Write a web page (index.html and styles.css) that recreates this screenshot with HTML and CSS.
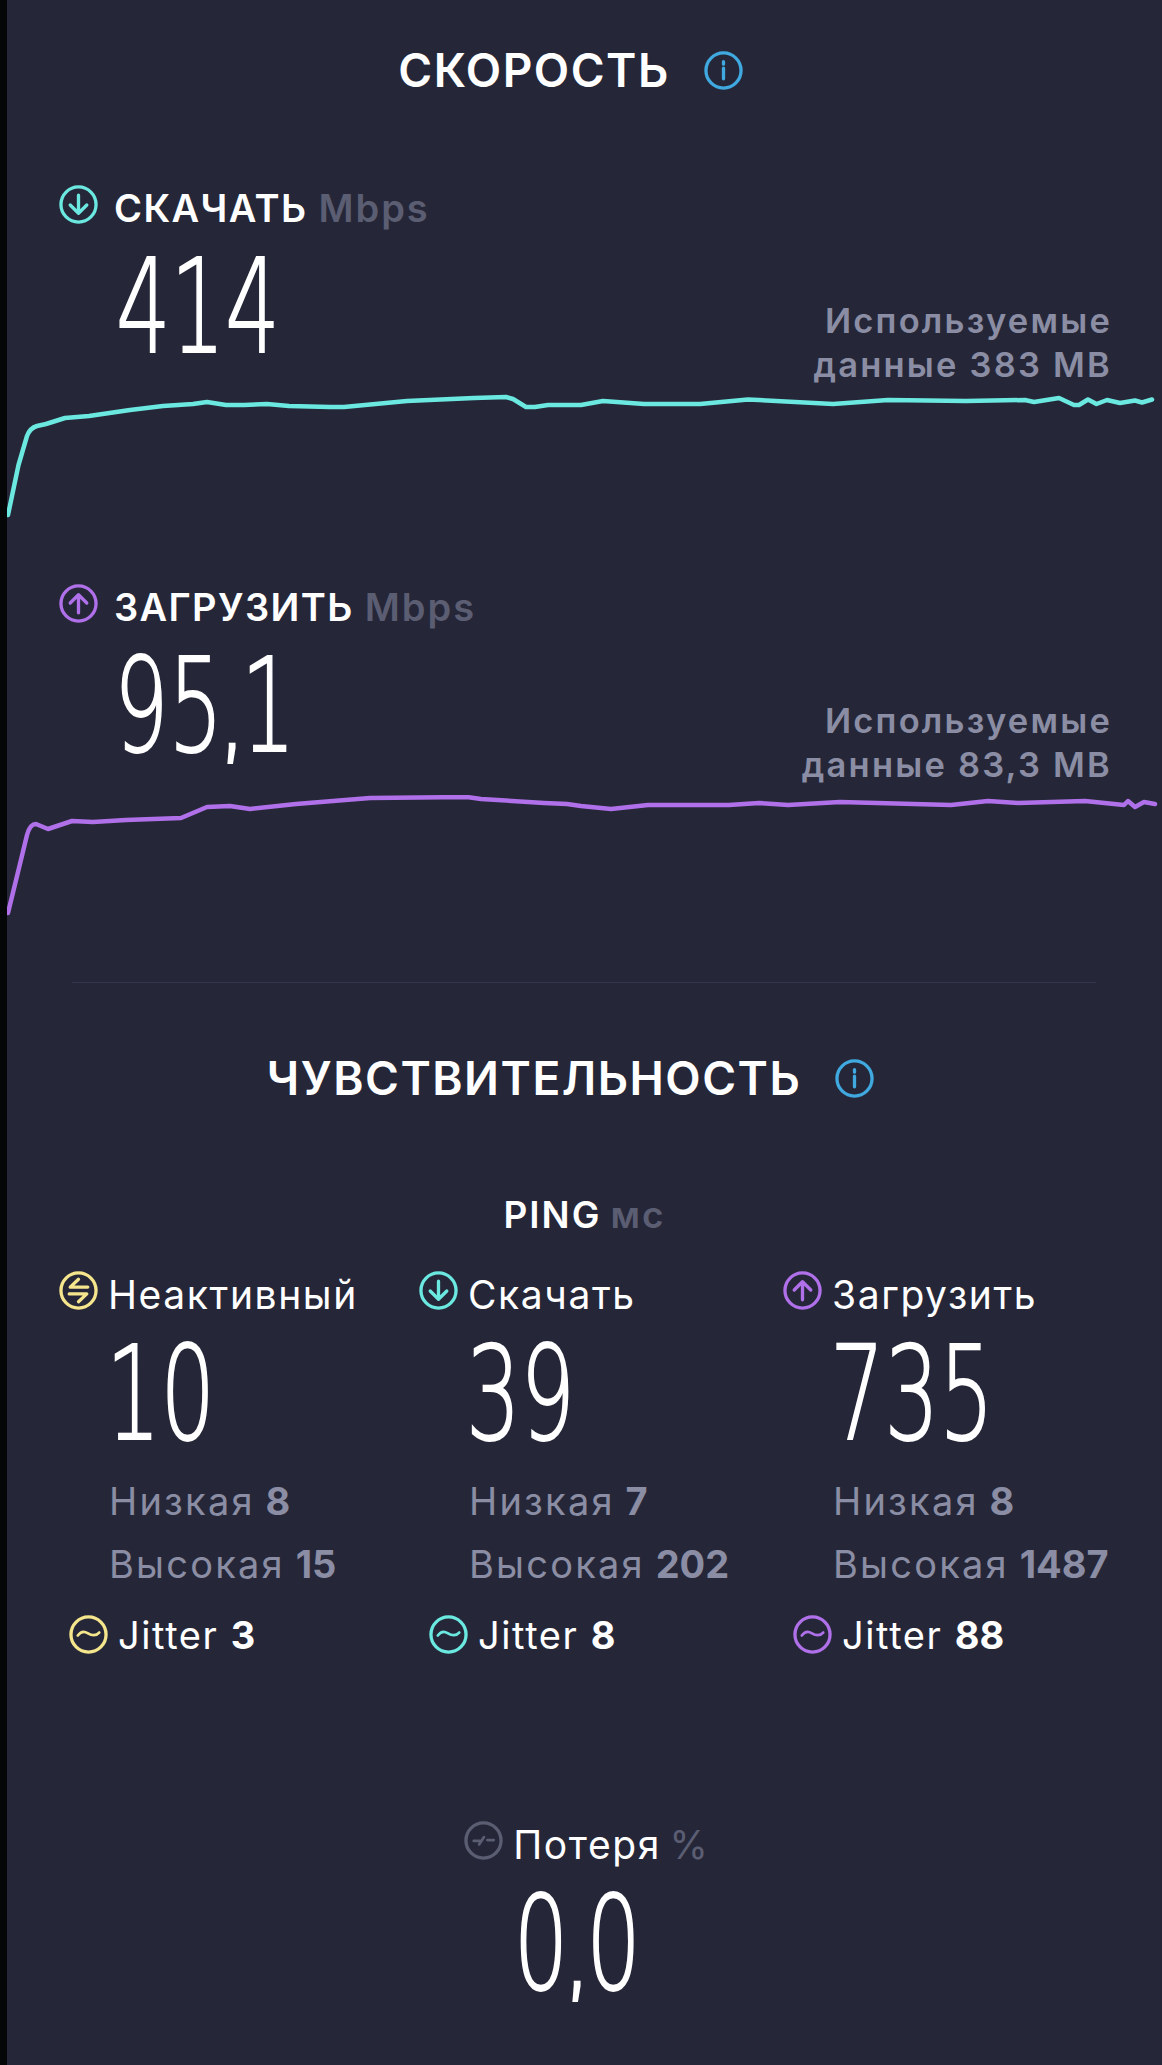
FILE: index.html
```html
<!DOCTYPE html>
<html lang="ru">
<head>
    <meta charset="UTF-8">
    <title>Скорость</title>
    <link rel="stylesheet" href="styles.css">
</head>
<body>
<svg class="sprite" width="0" height="0">
    <symbol id="i-down" viewBox="0 0 40 40"><circle cx="20" cy="20" r="18"/><path d="M20 10.500v18.500M11.500 20.500l8.500 8.500 8.500-8.500"/></symbol>
    <symbol id="i-up" viewBox="0 0 40 40"><circle cx="20" cy="20" r="18"/><path d="M20 29.500V11M11.500 19.500l8.500-8.500 8.500 8.500"/></symbol>
    <symbol id="i-idle" viewBox="0 0 40 40"><circle cx="20" cy="20" r="18"/><path d="M20 8.500l-8.500 8h18M20 31.500l8.500-8h-18"/></symbol>
    <symbol id="i-jitter" viewBox="0 0 40 40"><circle cx="20" cy="20" r="18"/><path class="thin" d="M9 21c3-4 6-5 10-2.500s8 4 12-.5"/></symbol>
    <symbol id="i-loss" viewBox="0 0 40 40"><circle cx="20" cy="20" r="18"/><path class="thin" d="M10 20.500h6M15.500 24l5-7.500M24 19.500h6.500"/></symbol>
    <symbol id="i-info" viewBox="0 0 40 40"><circle cx="20" cy="20" r="18"/><path d="M20 17.500v11M20 11v2.500"/></symbol>
</svg>

<main class="page">
    <h1 class="title title-speed"><span>СКОРОСТЬ</span> <svg class="icon blue"><use href="#i-info"/></svg></h1>

    <section class="speed speed-down">
        <div class="speed-top">
            <div>
                <div class="speed-head">
                    <svg class="icon cyan"><use href="#i-down"/></svg>
                    <span class="speed-name">СКАЧАТЬ</span> <span class="unit">Mbps</span>
                </div>
                <div class="big speed-value">414</div>
            </div>
            <div class="used">Используемые<br>данные 383 MB</div>
        </div>
        <svg class="chart" width="1155" height="130" viewBox="7 392 1155 130">
            <path class="line-cyan" d="M8 515L18.500 465L27 436Q30 428 37 426L46 424L65 418L89 416L130 410L163 406L193 404L207 402L226 405L244 405L267 404L289 406L330 407L344 407L407 401L474 398L506 397L513 399L526 407L535 407L548 405L581 405L603 401L644 404L700 404L748 399.500L833 404L888 400L966 401L1025 400L1034 402L1059 398L1074 405L1079 405L1088 399.500L1096.500 404L1107 400L1120 403L1135 400.500L1142 402.500L1152 399.500"/>
        </svg>
    </section>

    <section class="speed speed-up">
        <div class="speed-top">
            <div>
                <div class="speed-head">
                    <svg class="icon purple"><use href="#i-up"/></svg>
                    <span class="speed-name">ЗАГРУЗИТЬ</span> <span class="unit">Mbps</span>
                </div>
                <div class="big speed-value">95<span class="comma">,</span>1</div>
            </div>
            <div class="used">Используемые<br>данные 83,3 MB</div>
        </div>
        <svg class="chart" width="1155" height="125" viewBox="7 795 1155 125">
            <path class="line-purple" d="M8 913L18.500 870L27 835Q30 824 36 824L48 829L72 821L93 822L126 820L181 818L207 807L230 806L250 809L296 804L370 798L467 797L481 799L544 803L567 804L581 806L611 809L648 805L729 805L759 803L788 805L840 802L951 805L988 801L1018 803L1085 801L1124 805L1128 801L1135 807L1144 802L1155 804"/>
        </svg>
    </section>

    <hr class="divider">

    <h1 class="title title-latency"><span>ЧУВСТВИТЕЛЬНОСТЬ</span> <svg class="icon blue"><use href="#i-info"/></svg></h1>

    <h2 class="ping"><b>PING</b> <span class="unit">мс</span></h2>

    <section class="ping-grid">
        <div class="ping-col">
            <div class="ping-head"><svg class="icon yellow"><use href="#i-idle"/></svg><span>Неактивный</span></div>
            <div class="big ping-value">10</div>
            <div class="stat">Низкая <b>8</b></div>
            <div class="stat">Высокая <b>15</b></div>
            <div class="jitter"><svg class="icon yellow"><use href="#i-jitter"/></svg><span>Jitter <b>3</b></span></div>
        </div>
        <div class="ping-col">
            <div class="ping-head"><svg class="icon cyan"><use href="#i-down"/></svg><span>Скачать</span></div>
            <div class="big ping-value">39</div>
            <div class="stat">Низкая <b>7</b></div>
            <div class="stat">Высокая <b>202</b></div>
            <div class="jitter"><svg class="icon cyan"><use href="#i-jitter"/></svg><span>Jitter <b>8</b></span></div>
        </div>
        <div class="ping-col">
            <div class="ping-head"><svg class="icon purple"><use href="#i-up"/></svg><span>Загрузить</span></div>
            <div class="big ping-value">735</div>
            <div class="stat">Низкая <b>8</b></div>
            <div class="stat">Высокая <b>1487</b></div>
            <div class="jitter"><svg class="icon purple"><use href="#i-jitter"/></svg><span>Jitter <b>88</b></span></div>
        </div>
    </section>

    <section class="loss">
        <div class="ping-head loss-head"><svg class="icon gray"><use href="#i-loss"/></svg><span>Потеря <span class="unit-light">%</span></span></div>
        <div class="big loss-value">0<span class="comma">,</span>0</div>
    </section>
</main>
</body>
</html>
```

FILE: styles.css
```css
body {
    margin: 0;
    height: 2065px;
    overflow: hidden;
    background: #252738;
    color: #fff;
    font-family: Inter, "Noto Sans", sans-serif;
}
.sprite {
    position: absolute;
}
.page {
    box-sizing: border-box;
    height: 2065px;
    border-left: 7px solid #050608;
}
.icon {
    width: 39px;
    height: 39px;
    flex: none;
    fill: none;
    stroke-width: 3.4;
    stroke-linecap: round;
    stroke-linejoin: round;
}
.thin {
    stroke-width: 2.8;
}
.blue { stroke: #3fa9e0; }
.cyan { stroke: #6be8e0; }
.purple { stroke: #b070ea; }
.yellow { stroke: #f5e58c; }
.gray { stroke: #5b5d72; }

.title {
    display: flex;
    justify-content: center;
    align-items: center;
    gap: 34px;
    height: 54px;
    margin: 0;
    padding-right: 28px;
    font-size: 46px;
    font-weight: 600;
    line-height: 54px;
    letter-spacing: 1.5px;
}
.title-speed {
    padding-top: 43px;
}
.title-latency {
    margin-top: 68px;
}

.speed {
    padding-top: 87px;
}
.speed-up {
    padding-top: 57px;
}
.speed-top {
    display: flex;
    justify-content: space-between;
    align-items: flex-end;
    height: 208px;
    padding: 0 50px 0 52px;
}
.speed-up .speed-top {
    height: 216px;
}
.speed-head {
    display: flex;
    align-items: center;
    height: 39px;
    font-size: 38px;
    font-weight: 600;
    white-space: pre;
}
.speed-name {
    margin-left: 16px;
    padding-top: 7px;
    letter-spacing: 1.4px;
}
.speed-head .unit {
    margin-left: 11px;
    padding-top: 7px;
    letter-spacing: 2px;
}
.unit {
    color: #5b5d72;
    font-weight: 600;
}
.big {
    font-family: "DejaVu Sans", sans-serif;
    font-size: 130px;
    font-weight: 200;
    line-height: 100px;
    -webkit-text-stroke: 2px #fff;
    transform: scaleX(0.66);
    transform-origin: left;
}
.comma {
    font-size: 85px;
    -webkit-text-stroke: 6px #fff;
}
.speed-value {
    margin: 33px 0 0 57px;
    height: 135px;
}
.speed-up .speed-value {
    margin-left: 55px;
    height: 139px;
}
.used {
    color: #8a8da3;
    font-size: 34.500px;
    font-weight: 600;
    line-height: 44px;
    letter-spacing: 2.200px;
    text-align: right;
    margin-bottom: 5px;
}
.speed-up .used {
    margin-bottom: 8px;
}
.chart {
    display: block;
    fill: none;
    stroke-width: 4.500;
    stroke-linecap: round;
    stroke-linejoin: round;
}
.line-cyan { stroke: #6be8e0; }
.line-purple { stroke: #b070ea; }

.divider {
    height: 1px;
    margin: 62px 66px 0 65px;
    border: 0;
    background: #33364a;
}

.ping {
    display: flex;
    justify-content: center;
    gap: 9px;
    margin: 88px 0 0;
    font-size: 37px;
    font-weight: 600;
    line-height: 44px;
    letter-spacing: 2px;
}
.ping b {
    font-weight: 600;
}

.ping-grid {
    display: grid;
    grid-template-columns: 360px 364px 1fr;
    padding-left: 52px;
    margin-top: 34px;
}
.ping-head {
    display: flex;
    align-items: center;
    gap: 10px;
    height: 39px;
    font-size: 39px;
    letter-spacing: 1.600px;
    white-space: pre;
}
.ping-head > span {
    padding-top: 8px;
}
.loss-head {
    margin-left: 3px;
}
.unit-light {
    margin-left: -4px;
    color: #5b5d72;
    letter-spacing: 0;
}
.ping-value {
    margin: 34px 0 0 47px;
    height: 100px;
}
.stat {
    margin-left: 50px;
    color: #8a8da3;
    font-size: 38px;
    line-height: 63px;
    letter-spacing: 2.200px;
    word-spacing: -2px;
}
.ping-value + .stat {
    margin-top: 26px;
}
.stat b,
.jitter b {
    font-weight: 700;
    letter-spacing: 0;
}
.jitter {
    display: flex;
    align-items: center;
    gap: 10px;
    height: 39px;
    margin: 19px 0 0 10px;
    font-size: 38px;
    letter-spacing: 1.600px;
    white-space: pre;
}

.loss {
    display: flex;
    flex-direction: column;
    align-items: center;
    margin-top: 167px;
}
.loss-value {
    margin: 34px 14px 0 0;
    transform-origin: center;
}
```
